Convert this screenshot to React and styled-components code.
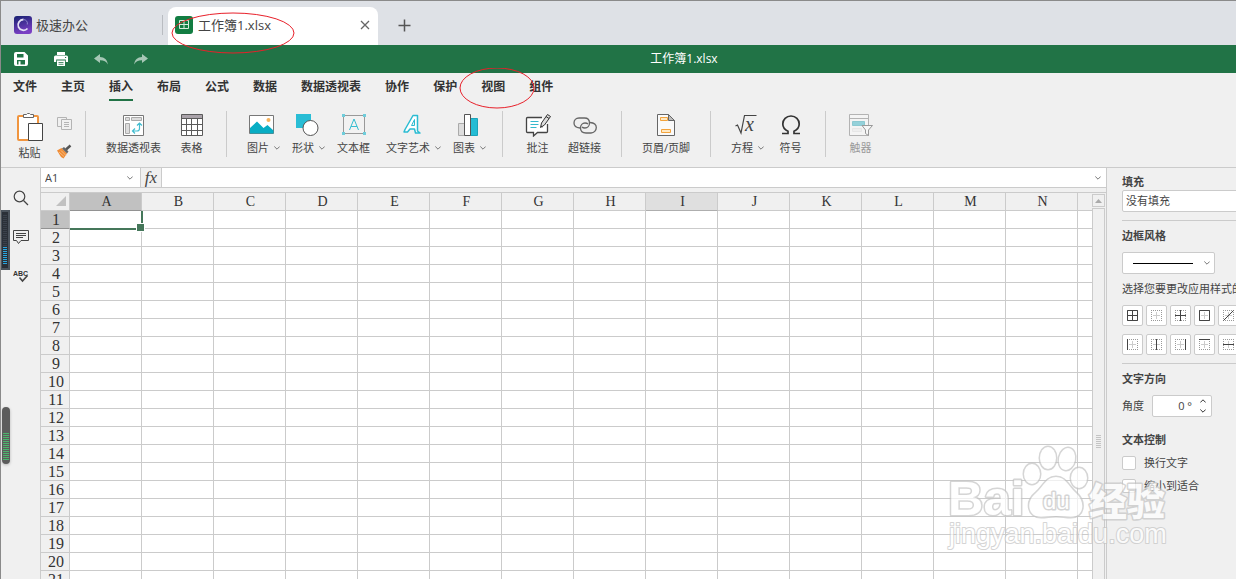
import React, { useState } from 'react';
import styled, { createGlobalStyle } from 'styled-components';

const GlobalStyle = createGlobalStyle`
  * {
    box-sizing: border-box;
  }

  body {
    margin: 0;
    overflow: hidden;
    color: #444;
    font-family: 'Open Sans', 'Noto Sans CJK SC', sans-serif;
    font-size: 11px;
    line-height: 16px;
  }

  button, input, select {
    margin: 0;
    padding: 0;
    border: none;
    border-radius: 0;
    background: none;
    color: inherit;
    font: inherit;
    outline: none;
  }

  button {
    cursor: pointer;
  }

  svg {
    display: block;
    flex: none;
  }
`;

const Window = styled.div`
  position: relative;
  display: flex;
  flex-direction: column;
  height: 100vh;
  overflow: hidden;
  background: #f0f0f0;
  border-top: 1px solid #8a8a8a;
  border-left: 1px solid #8a8a8a;
`;

/* ---------- document tabs ---------- */

const DocTabs = styled.nav`
  display: flex;
  flex: none;
  align-items: center;
  height: 44px;
  padding-left: 13px;
  background: #dee1e6;
  font-size: 13px;
`;

const HomeTab = styled.button`
  display: flex;
  align-items: center;
  gap: 4px;
  width: 149px;
  height: 20px;
  margin-top: 4px;
  border-right: 1px solid #b9bcc1;
`;

const DocTab = styled.div`
  display: flex;
  align-items: center;
  align-self: flex-end;
  width: 210px;
  height: 38px;
  margin-left: 5px;
  padding: 0 8px 2px 7px;
  background: #fff;
  border-radius: 8px 8px 0 0;
`;

const DocName = styled.button`
  display: flex;
  flex: 1;
  align-items: center;
  gap: 5px;
`;

const NewTab = styled.button`
  margin-left: 20px;
  padding-top: 5px;
`;

/* ---------- green title bar ---------- */

const TitleBar = styled.header`
  display: flex;
  flex: none;
  align-items: center;
  gap: 26px;
  height: 28px;
  padding: 0 42px 0 13px;
  background: #217346;
  color: #fff;
`;

const Title = styled.h1`
  flex: 1;
  margin: 0;
  font-size: 12px;
  font-weight: 400;
  text-align: center;
`;

/* ---------- ribbon ---------- */

const Menu = styled.nav`
  display: flex;
  flex: none;
  gap: 24px;
  height: 28px;
  padding-left: 12px;
`;

const MenuTab = styled.button`
  padding-top: 2px;
  border-bottom: 2px solid ${({ $active }) => ($active ? '#217346' : 'transparent')};
  color: #333;
  font-size: 12px;
  font-weight: 700;
`;

const Ribbon = styled.div`
  display: flex;
  flex: none;
  align-items: center;
  height: 67px;
  border-bottom: 1px solid #cbcbcb;
`;

const Group = styled.div`
  display: flex;
  align-items: center;
  height: 46px;
  padding: 0 12px;
  border-right: ${({ $last }) => ($last ? 'none' : '1px solid #cbcbcb')};
`;

const PasteGroup = styled(Group)`
  gap: 14px;
  padding: 6px 13px 0 15px;
`;

const PasteButton = styled.button`
  display: flex;
  flex-direction: column;
  align-items: center;
  gap: 2px;
`;

const SmallTools = styled.div`
  display: flex;
  flex-direction: column;
  gap: 13px;
`;

const ToolButton = styled.button`
  display: flex;
  flex-direction: column;
  align-items: center;
  gap: 3px;
  min-width: 45px;
  opacity: ${({ disabled }) => (disabled ? 0.5 : 1)};
`;

const ToolLabel = styled.span`
  display: flex;
  align-items: center;
  gap: 5px;
  padding: ${({ $menu }) => ($menu ? '0 4px 0 8px' : '0 8px')};
  white-space: nowrap;
`;

/* ---------- body ---------- */

const Body = styled.div`
  display: flex;
  flex: 1;
  min-height: 0;
`;

const SideBar = styled.aside`
  display: flex;
  flex: none;
  flex-direction: column;
  width: 40px;
  padding-top: 10px;
  border-right: 1px solid #cbcbcb;
`;

const SideButton = styled.button`
  display: flex;
  align-items: center;
  justify-content: center;
  height: 39px;
`;

const Main = styled.main`
  display: flex;
  flex: 1;
  flex-direction: column;
  min-width: 0;
`;

const FormulaBar = styled.div`
  display: flex;
  flex: none;
  height: 20px;
  background: #fff;
  border-bottom: 1px solid #cbcbcb;
`;

const NameBox = styled.div`
  display: flex;
  align-items: center;
  width: 100px;
  padding: 0 7px 0 4px;
  border-right: 1px solid #cbcbcb;

  input {
    flex: 1;
    min-width: 0;
  }
`;

const FxButton = styled.button`
  width: 21px;
  background: #f0f0f0;
  border-right: 1px solid #cbcbcb;
  font-family: 'Liberation Serif', serif;
  font-size: 17px;
  font-style: italic;
`;

const FormulaInput = styled.input`
  flex: 1;
  min-width: 0;
  padding: 0 4px;
`;

const ExpandButton = styled.button`
  padding-right: 5px;
`;

const SheetArea = styled.div`
  display: flex;
  flex: 1;
  min-height: 0;
  margin-top: 4px;
  border-top: 1px solid #cbcbcb;
`;

const Sheet = styled.div`
  flex: 1;
  min-width: 0;
  overflow: hidden;
  background: #fff;
`;

const Grid = styled.table`
  width: max-content;
  border-spacing: 0;
  table-layout: fixed;
  font-family: 'Liberation Serif', serif;
  font-size: 16px;
`;

const Corner = styled.td`
  width: 29px;
  height: 18px;
  padding: 0 3px 2px 0;
  background: #f0f0f0;
  border-right: 1px solid #cbcbcb;
  border-bottom: 1px solid #cbcbcb;

  svg {
    margin-left: auto;
  }
`;

const headFill = { selected: '#c1c1c1', hover: '#dfdfdf', plain: '#f0f0f0' };
const headLine = { selected: '#929292', hover: '#aeaeae', plain: '#cbcbcb' };

const HeadCell = styled.th`
  height: 18px;
  padding: 0 0 0 2px;
  background: ${({ $state }) => headFill[$state]};
  border-right: 1px solid #cbcbcb;
  border-bottom: 1px solid ${({ $state }) => headLine[$state]};
  font-weight: 400;
  line-height: 16px;
  color: #333;
`;

const ColHead = styled(HeadCell)`
  width: 72px;
  font-size: 14px;
`;

const Cell = styled.td`
  position: relative;
  height: 18px;
  padding: 0;
  border-right: 1px solid #cbcbcb;
  border-bottom: 1px solid #cbcbcb;
`;

/* the frame sits on top of the grid lines of the selected cell */
const Selection = styled.div`
  position: absolute;
  z-index: 1;
  top: 0;
  right: -2px;
  bottom: -2px;
  left: 0;
  border-right: 2px solid #45775a;
  border-bottom: 2px solid #45775a;

  &::after {
    content: '';
    position: absolute;
    right: -4px;
    bottom: -4px;
    width: 7px;
    height: 7px;
    background: #45775a;
    border: 1px solid #fff;
  }
`;

const ScrollBar = styled.div`
  display: flex;
  flex: none;
  flex-direction: column;
  gap: 1px;
  width: 14px;
  padding: 1px 1px 0 0;
`;

const ScrollUp = styled.button`
  display: flex;
  flex: none;
  align-items: center;
  justify-content: center;
  height: 13px;
  border: 1px solid #cbcbcb;
`;

const ScrollThumb = styled.div`
  display: flex;
  flex: none;
  align-items: center;
  justify-content: center;
  height: 466px;
  border: 1px solid #cbcbcb;

  &::after {
    content: '';
    width: 5px;
    height: 13px;
    background: repeating-linear-gradient(#c4c4c4 0 1px, transparent 1px 2px);
  }
`;

/* ---------- settings panel ---------- */

const Panel = styled.aside`
  flex: none;
  width: 130px;
  padding: 6px 0 0 15px;
  overflow: hidden;
  border-left: 1px solid #cbcbcb;
`;

const PanelTitle = styled.h2`
  margin: 0;
  font-size: 11px;
  font-weight: 700;
  line-height: 16px;
`;

const Rule = styled.hr`
  width: 200px;
  height: 1px;
  margin: 8px 0 7px;
  border: none;
  background: #cbcbcb;
`;

const SelectBox = styled.div`
  display: grid;
  align-items: center;
  width: ${({ $wide }) => ($wide ? '194px' : '93px')};
  height: 22px;
  background: #fff;
  border: 1px solid #cbcbcb;
  border-radius: 2px;

  > * {
    grid-area: 1 / 1;
  }

  > svg {
    justify-self: end;
    margin-right: 4px;
    pointer-events: none;
  }

  > svg:nth-child(2):not(:last-child) {
    justify-self: start;
    margin-left: 10px;
  }
`;

const Select = styled.select`
  width: 100%;
  height: 20px;
  padding: 0 3px;
  appearance: none;
`;

const BorderSelect = styled(SelectBox)`
  margin: 8px 0 7px;
`;

const Hint = styled.p`
  margin: 0;
  white-space: nowrap;
`;

const BorderGrid = styled.div`
  display: grid;
  grid-template-columns: repeat(8, 21px);
  gap: 8px 3px;
  margin-top: 8px;
`;

const BorderButton = styled.button`
  display: flex;
  align-items: center;
  justify-content: center;
  height: 21px;
  background: #fff;
  border: 1px solid #cbcbcb;
  border-radius: 2px;
`;

const AngleRow = styled.div`
  display: flex;
  align-items: center;
  gap: 8px;
  margin: 8px 0 15px;
`;

const Spinner = styled.div`
  display: flex;
  align-items: center;
  width: 60px;
  height: 22px;
  padding-right: 5px;
  background: #fff;
  border: 1px solid #cbcbcb;
  border-radius: 2px;

  input {
    width: 39px;
    margin-right: 8px;
    min-width: 0;
    text-align: right;
  }
`;

const Steps = styled.div`
  display: flex;
  flex-direction: column;
  gap: 6px;
`;

const CheckRow = styled.label`
  display: flex;
  align-items: center;
  gap: 8px;
  height: 16px;
  margin-top: 7px;
  white-space: nowrap;
`;

const CheckBox = styled.input`
  flex: none;
  width: 14px;
  height: 14px;
  appearance: none;
  background: #fff;
  border: 1px solid #cbcbcb;
  border-radius: 2px;
`;

/* ---------- things floating over the window ---------- */

const Mark = styled.svg`
  position: absolute;
  top: ${({ $top }) => $top}px;
  left: ${({ $left }) => $left}px;
  pointer-events: none;
`;

const Meter = styled.div`
  position: absolute;
  top: 209px;
  left: 0;
  width: 9px;
  height: 60px;
  padding: 3px 1px;
  background: #2b3038;
  border: 2px solid #4b535c;
  border-left-width: 1px;

  &::after {
    content: '';
    display: block;
    height: 100%;
    background:
      repeating-linear-gradient(transparent 0 1px, #2b3038 1px 2px),
      linear-gradient(#3b424c 62%, #2aa7e0 62%);
  }
`;

const Pill = styled.div`
  position: absolute;
  top: 406px;
  left: 1px;
  width: 8px;
  height: 57px;
  padding: 26px 1px 3px;
  background: #5c5c5c;
  border-radius: 4px;
  box-shadow: 0 1px 3px rgba(0, 0, 0, 0.25);

  &::after {
    content: '';
    display: block;
    height: 100%;
    background: repeating-linear-gradient(#4cb56d 0 1px, #5c5c5c 1px 2px);
  }
`;

const Watermark = styled.svg`
  position: absolute;
  right: 60px;
  bottom: 20px;
  pointer-events: none;
`;

/* ---------- icons ---------- */

const Svg = ({ w = 24, h = 24, children }) => (
  <svg width={w} height={h} viewBox={`0 0 ${w} ${h}`} fill="none" aria-hidden="true">
    {children}
  </svg>
);

const Chevron = ({ up, dark }) => (
  <Svg w={6} h={4}>
    <path d={up ? 'M.3 3.500 3 .8 5.700 3.500' : 'M.3.5 3 3.200 5.700.5'} stroke={dark ? '#333' : '#777'} />
  </Svg>
);

const LogoIcon = () => (
  <Svg w={18} h={18}>
    <defs>
      <linearGradient id="logo" x1="0" y1="0" x2="0.3" y2="1">
        <stop offset="0" stopColor="#14206f" />
        <stop offset="1" stopColor="#7a3fc4" />
      </linearGradient>
    </defs>
    <rect width="18" height="18" rx="3" fill="url(#logo)" />
    <path d="M9.500 3.500a5.400 5.400 0 1 0 4 9" stroke="#e4e0f5" strokeWidth="1.800" />
    <path d="M9.500 3.500c2.800.2 4.500 2.500 3.800 5" stroke="#8f86cc" />
  </Svg>
);

const SheetIcon = () => (
  <Svg w={18} h={18}>
    <rect width="18" height="18" rx="3" fill="#127d42" />
    <path d="M4.500 4.500h9v8h-9zM9 4.500v8M4.500 8.500h9" stroke="#d9ecdf" />
  </Svg>
);

const CloseIcon = () => (
  <Svg w={10} h={10}>
    <path d="m1 1 8 8M9 1 1 9" stroke="#666" strokeWidth="1.300" />
  </Svg>
);

const PlusIcon = () => (
  <Svg w={13} h={13}>
    <path d="M6.500.5v12M.5 6.500h12" stroke="#555" strokeWidth="1.500" />
  </Svg>
);

const SaveIcon = () => (
  <Svg w={14} h={14}>
    <path fillRule="evenodd" d="M2 0h8.500L14 3.500V12a2 2 0 0 1-2 2H2a2 2 0 0 1-2-2V2a2 2 0 0 1 2-2zM3 2v3.500h6.500V2zM3 8v4.500h8V8zM4.500 9.200h2v3.300h-2z" fill="#fff" />
  </Svg>
);

const PrintIcon = () => (
  <Svg w={14} h={14}>
    <path d="M3 0h8v3H3zM1.500 3.500h11A1.500 1.500 0 0 1 14 5v5h-2.200V7.500H2.200V10H0V5a1.500 1.500 0 0 1 1.500-1.500z" fill="#fff" />
    <path d="M3 8.500h8V14H3z" fill="#fff" />
    <path d="M4.500 10.500h5M4.500 12.300h5" stroke="#217346" strokeWidth=".8" />
    <path d="M11 5.500h1.200" stroke="#217346" />
  </Svg>
);

const UndoIcon = () => (
  <Svg w={14} h={14}>
    <path d="M0 6.500 6 2v3c4.500.2 7.300 2.800 7.800 7.500C12.300 9.700 10 8.300 6 8.300V11z" fill="#a6c7b5" />
  </Svg>
);

const RedoIcon = () => (
  <Svg w={14} h={14}>
    <path d="M14 6.500 8 2v3C3.500 5.200.7 7.800.2 12.500 1.700 9.700 4 8.300 8 8.300V11z" fill="#a6c7b5" />
  </Svg>
);

const PasteIcon = () => (
  <Svg w={27} h={30}>
    <rect x="2" y="3" width="20" height="24" rx="1" fill="#fff" stroke="#f0953f" strokeWidth="2" />
    <path d="M7.500 4.500v-3h3l1-1h2l1 1h3v3z" fill="#fff" stroke="#666" />
    <path d="M12.500 10.500h14v17h-14z" fill="#fff" stroke="#444" />
  </Svg>
);

const CopyIcon = () => (
  <Svg w={15} h={15}>
    <path d="M.5 1.500h9v9h-9z" fill="#f0f0f0" stroke="#b4b4b4" />
    <path d="M4.500 3.500h10v10h-10zM7 6.500h5M7 8.500h5M7 10.500h5" fill="#f0f0f0" stroke="#b4b4b4" />
  </Svg>
);

const BrushIcon = () => (
  <Svg w={15} h={15}>
    <path d="M0 6.500 4.500 4 10 9.500 6.500 14.500 4 13z" fill="#f08c35" />
    <path d="m2 8 5 4.500M4 6.500l5 5" stroke="#f7c896" strokeWidth=".8" />
    <path d="m5 4.500 2-1.500 4.500 4.500-1.500 2z" fill="#666" />
    <path d="m9 5.500 4.500-4" stroke="#555" strokeWidth="2.500" />
  </Svg>
);

const PivotIcon = () => (
  <Svg>
    <path d="M1.500 2.500h20v20h-20z" fill="#fff" stroke="#777" />
    <path d="M3.500 4.500h4v3h-4zM9.500 4.500h10v3h-10zM3.500 10.500h4v10h-4z" fill="#ddd" stroke="#aaa" />
    <path d="M17.500 10.500v5c0 1.500-1 2.500-2.500 2.500h-4.500M15 12.500l2.500-2.500 2.500 2.500M13 15.500 10.500 18l2.500 2.500" stroke="#43bdd0" strokeWidth="1.200" />
  </Svg>
);

const TableIcon = () => (
  <Svg>
    <path d="M1.500 1.500h21v21h-21z" fill="#fff" />
    <path d="M1.500 1.500h21v3.500h-21z" fill="#aaa3aa" />
    <path d="M1.500 1.500h21v21h-21zM1.500 5.500h21M1.500 11.500h21M1.500 17.500h21M6.500 5v17.500M11.500 5v17.500M17.500 5v17.500" stroke="#5a5a5a" />
  </Svg>
);

const ImageIcon = () => (
  <Svg w={26}>
    <path d="M.5 2.500h24v18H.5z" fill="#fff" stroke="#777" />
    <path d="M1 19.500V15l7-6.500 6.500 6.500 4-3 6 5.500v3H1z" fill="#08adc4" />
    <circle cx="19.500" cy="7" r="2" fill="#f7b35c" />
  </Svg>
);

const ShapeIcon = () => (
  <Svg>
    <path d="M1 1h15v14H1z" fill="#29bdd5" />
    <circle cx="15.500" cy="15" r="7.500" fill="#fff" stroke="#555" />
  </Svg>
);

const TextBoxIcon = () => (
  <Svg>
    <path d="M1.500 2.500h21v18h-21z" fill="#f2f2f2" stroke="#999" />
    <path d="M0 1h3v3H0zM21 1h3v3h-3zM0 19h3v3H0zM21 19h3v3h-3z" fill="#6fcddb" />
    <path d="M7.500 17 12 6l4.500 11M9 13.500h6" stroke="#35bdd0" />
  </Svg>
);

const WordArtIcon = () => (
  <Svg>
    <path d="M5 16.500 13 2.500h4.500L17.500 18l2.500 2h-4.500l-1-4H10l-2.500 3H4z" fill="#fff" stroke="#2bbcd2" strokeWidth="1.500" strokeLinejoin="round" />
    <path d="m14.500 6.500-3 6h3z" fill="#f0f0f0" stroke="#2bbcd2" />
  </Svg>
);

const ChartIcon = () => (
  <Svg>
    <path d="M2.500 10.500h7v12h-7z" fill="#ddd" stroke="#aaa" />
    <path d="M14.500 5.500h7v17h-7z" fill="#24bcd4" stroke="#1aa3b9" />
    <path d="M8.500 1.500h6v21h-6z" fill="#fff" stroke="#555" />
  </Svg>
);

const CommentIcon = () => (
  <Svg w={26}>
    <path d="M17 4.500H2.500c-.7 0-1 .3-1 1v13c0 .7.300 1 1 1h6V23l4-3.500h9c.7 0 1-.3 1-1V11" fill="#fff" stroke="#444" strokeWidth="1.300" />
    <path d="M5.500 8.500h8M5.500 11.500h8M5.500 14.500h6" stroke="#35b8cc" />
    <path d="m15.500 14.500 1-4.500 6-8.500 3 2-6 8.500z" fill="#ddd" stroke="#333" strokeLinejoin="round" />
    <path d="m21 3.500 3 2M16 13l1.500 1" stroke="#333" />
  </Svg>
);

const LinkIcon = () => (
  <Svg>
    <path d="M7 15c-3.500-.3-6-2.300-6-5s2-5 5-5h5.500c3 0 5 2 5 5s-2 5-4.500 5c-1.500 0-2.500-.5-3-1" stroke="#666" strokeWidth="1.300" />
    <path d="M17 9.500c3.700.3 6.300 2 6.300 5s-2.300 5.500-5.300 5.500h-5c-3.500 0-5.500-2-5.500-5s2-5 4.500-5c1.500 0 2.500.5 3 1" stroke="#666" strokeWidth="1.300" />
  </Svg>
);

const HeaderFooterIcon = () => (
  <Svg>
    <path d="M3.500 1.500h11l6 6v15h-17z" fill="#fafafa" stroke="#666" />
    <path d="M14.500 1.500v6h6z" fill="#bbb" stroke="#666" />
    <path d="M6.500 4.500h7v3h-7zM7.500 16.500h9v3h-9z" fill="#ffe8c2" stroke="#f2a33c" />
  </Svg>
);

const EquationIcon = () => (
  <Svg>
    <path d="m1.500 13 2-1 3.500 8 3.500-17.500h12" stroke="#444" strokeWidth="1.200" />
    <text x="11" y="18" fontFamily="Liberation Serif, serif" fontSize="20" fontStyle="italic" fill="#444">x</text>
  </Svg>
);

const OmegaIcon = () => (
  <Svg>
    <path d="M3 20.500h6v-2.300C6 16.800 3.800 14.300 3.800 11c0-4.500 3.400-8 8.200-8s8.200 3.500 8.200 8c0 3.300-2.200 5.800-5.200 7.200v2.300h6" stroke="#333" strokeWidth="1.700" />
  </Svg>
);

const SlicerIcon = () => (
  <Svg w={26}>
    <path d="M1.500 1.500h19v21h-19zM1.500 5.500h19" fill="#f8f8f8" stroke="#777" />
    <path d="M4.500 8.500h12v4h-12z" fill="#3bb4c5" stroke="#2aa3b4" />
    <path d="M4.500 15.500h9v3h-9z" fill="#eee" stroke="#ddd" />
    <path d="M14 12.500h10.500l-4 4.500v5.500l-3-2V17z" fill="#fff" stroke="#444" />
  </Svg>
);

const SearchIcon = () => (
  <Svg w={16} h={16}>
    <circle cx="6.500" cy="6.500" r="5.300" stroke="#444" strokeWidth="1.200" />
    <path d="m10.500 10.500 4.500 4.500" stroke="#444" strokeWidth="1.300" />
  </Svg>
);

const NoteIcon = () => (
  <Svg w={16} h={16}>
    <path d="M.5 1.500h15v10H8l-2.500 3-2-3h-3zM3 4.500h10M3 6.500h10M3 8.500h7" stroke="#444" />
  </Svg>
);

const SpellIcon = () => (
  <Svg w={16} h={16}>
    <text x="0" y="8" fontFamily="Liberation Sans, sans-serif" fontSize="7" fontWeight="700" fill="#333">ABC</text>
    <path d="m6.500 9.500 3 3.500 5-5.500" stroke="#444" strokeWidth="1.600" />
  </Svg>
);

/* the stroke drawn dark over the dotted frame */
const borderKinds = [
  ['全部', 'M1.500 1.500h10v10h-10zM6.500 1.500v10M1.500 6.500h10'],
  ['无', ''],
  ['内部', 'M6.500 1v11M1 6.500h11'],
  ['外部', 'M1.500 1.500h10v10h-10z'],
  ['斜线', 'M1.500 11.500l10-10'],
  ['反斜线', 'M1.500 1.500l10 10'],
  ['左上', 'M1.500 1v11'],
  ['左下', 'M1 11.500h11'],
  ['左', 'M1.500 1v11'],
  ['垂直', 'M6.500 1v11'],
  ['右', 'M11.500 1v11'],
  ['上', 'M1 1.500h11'],
  ['水平', 'M1 6.500h11'],
  ['下', 'M1 11.500h11'],
];

const BorderIcon = ({ d }) => (
  <Svg w={13} h={13}>
    <path d="M1 1.500h11M1 11.500h11M1.500 1v11M11.500 1v11" stroke="#999" strokeDasharray="1 1" />
    <path d="M6.500 3v7M3 6.500h7" stroke="#ccc" />
    <path d={d} stroke="#444" />
  </Svg>
);

/* ---------- data ---------- */

const menu = ['文件', '主页', '插入', '布局', '公式', '数据', '数据透视表', '协作', '保护', '视图', '组件'];

const toolGroups = [
  [
    { label: '数据透视表', Icon: PivotIcon },
    { label: '表格', Icon: TableIcon },
  ],
  [
    { label: '图片', Icon: ImageIcon, menu: true },
    { label: '形状', Icon: ShapeIcon, menu: true },
    { label: '文本框', Icon: TextBoxIcon },
    { label: '文字艺术', Icon: WordArtIcon, menu: true },
    { label: '图表', Icon: ChartIcon, menu: true },
  ],
  [
    { label: '批注', Icon: CommentIcon },
    { label: '超链接', Icon: LinkIcon },
  ],
  [{ label: '页眉/页脚', Icon: HeaderFooterIcon }],
  [
    { label: '方程', Icon: EquationIcon, menu: true },
    { label: '符号', Icon: OmegaIcon },
  ],
  [{ label: '触器', Icon: SlicerIcon, disabled: true }],
];

const columns = 'ABCDEFGHIJKLMNO'.split('');
const rows = Array.from({ length: 24 }, (_, i) => i + 1);

const columnState = (name) => {
  if (name === 'A') return 'selected';
  return name === 'I' ? 'hover' : 'plain';
};

const App = () => {
  const [tab, setTab] = useState('插入');
  const [wrap, setWrap] = useState(false);
  const [shrink, setShrink] = useState(false);

  return (
    <Window>
      <GlobalStyle />

      <DocTabs>
        <HomeTab><LogoIcon />极速办公</HomeTab>
        <DocTab>
          <DocName><SheetIcon />工作簿1.xlsx</DocName>
          <button aria-label="关闭"><CloseIcon /></button>
        </DocTab>
        <NewTab aria-label="新建"><PlusIcon /></NewTab>
      </DocTabs>

      <TitleBar>
        <button aria-label="保存"><SaveIcon /></button>
        <button aria-label="打印"><PrintIcon /></button>
        <button aria-label="撤销"><UndoIcon /></button>
        <button aria-label="重做"><RedoIcon /></button>
        <Title>工作簿1.xlsx</Title>
      </TitleBar>

      <Menu>
        {menu.map((name) => (
          <MenuTab key={name} $active={name === tab} onClick={() => setTab(name)}>{name}</MenuTab>
        ))}
      </Menu>

      <Ribbon>
        <PasteGroup>
          <PasteButton><PasteIcon />粘贴</PasteButton>
          <SmallTools>
            <button aria-label="复制"><CopyIcon /></button>
            <button aria-label="格式刷"><BrushIcon /></button>
          </SmallTools>
        </PasteGroup>
        {toolGroups.map((group, i) => (
          <Group key={group[0].label} $last={i === toolGroups.length - 1}>
            {group.map((tool) => (
              <ToolButton key={tool.label} disabled={tool.disabled}>
                <tool.Icon />
                <ToolLabel $menu={tool.menu}>
                  {tool.label}
                  {tool.menu && <Chevron />}
                </ToolLabel>
              </ToolButton>
            ))}
          </Group>
        ))}
      </Ribbon>

      <Body>
        <SideBar>
          <SideButton aria-label="搜索"><SearchIcon /></SideButton>
          <SideButton aria-label="批注"><NoteIcon /></SideButton>
          <SideButton aria-label="拼写检查"><SpellIcon /></SideButton>
        </SideBar>

        <Main>
          <FormulaBar>
            <NameBox>
              <input aria-label="名称框" defaultValue="A1" />
              <button aria-label="名称列表"><Chevron /></button>
            </NameBox>
            <FxButton>fx</FxButton>
            <FormulaInput aria-label="编辑栏" />
            <ExpandButton aria-label="展开编辑栏"><Chevron /></ExpandButton>
          </FormulaBar>

          <SheetArea>
            <Sheet>
              <Grid>
                <thead>
                  <tr>
                    <Corner>
                      <Svg w={10} h={10}><path d="M10 0v10H0z" fill="#c1c1c1" /></Svg>
                    </Corner>
                    {columns.map((name) => (
                      <ColHead key={name} scope="col" $state={columnState(name)}>{name}</ColHead>
                    ))}
                  </tr>
                </thead>
                <tbody>
                  {rows.map((row) => (
                    <tr key={row}>
                      <HeadCell scope="row" $state={row === 1 ? 'selected' : 'plain'}>{row}</HeadCell>
                      {columns.map((name) => (
                        <Cell key={name}>{row === 1 && name === 'A' && <Selection />}</Cell>
                      ))}
                    </tr>
                  ))}
                </tbody>
              </Grid>
            </Sheet>
            <ScrollBar>
              <ScrollUp aria-label="向上滚动">
                <Svg w={7} h={4}><path d="M0 4 3.500 0 7 4z" fill="#aaa" /></Svg>
              </ScrollUp>
              <ScrollThumb />
            </ScrollBar>
          </SheetArea>
        </Main>

        <Panel>
          <PanelTitle>填充</PanelTitle>
          <SelectBox $wide>
            <Select aria-label="填充">
              <option>没有填充</option>
            </Select>
            <Chevron />
          </SelectBox>
          <Rule />
          <PanelTitle>边框风格</PanelTitle>
          <BorderSelect>
            <Select aria-label="边框风格">
              <option aria-label="实线" />
            </Select>
            <Svg w={60} h={1}><path d="M0 .5h60" stroke="#000" /></Svg>
            <Chevron />
          </BorderSelect>
          <Hint>选择您要更改应用样式的边框</Hint>
          <BorderGrid>
            {borderKinds.slice(0, 8).map(([name, d]) => (
              <BorderButton key={name} aria-label={name}><BorderIcon d={d} /></BorderButton>
            ))}
            {borderKinds.slice(8).map(([name, d]) => (
              <BorderButton key={name} aria-label={name}><BorderIcon d={d} /></BorderButton>
            ))}
          </BorderGrid>
          <Rule />
          <PanelTitle>文字方向</PanelTitle>
          <AngleRow>
            <label htmlFor="angle">角度</label>
            <Spinner>
              <input id="angle" defaultValue="0 °" />
              <Steps>
                <button aria-label="增加"><Chevron up dark /></button>
                <button aria-label="减少"><Chevron dark /></button>
              </Steps>
            </Spinner>
          </AngleRow>
          <PanelTitle>文本控制</PanelTitle>
          <CheckRow>
            <CheckBox type="checkbox" checked={wrap} onChange={() => setWrap(!wrap)} />
            换行文字
          </CheckRow>
          <CheckRow>
            <CheckBox type="checkbox" checked={shrink} onChange={() => setShrink(!shrink)} />
            缩小到适合
          </CheckRow>
        </Panel>
      </Body>

      <Meter />
      <Pill />

      <Mark $left={170} $top={11} width="126" height="42" fill="none">
        <ellipse cx="62" cy="21" rx="61" ry="20" stroke="#e8202a" />
      </Mark>
      <Mark $left={458} $top={67} width="78" height="42" fill="none">
        <ellipse cx="38" cy="20" rx="37" ry="20" stroke="#e8202a" />
      </Mark>

      <Watermark width="230" height="114" viewBox="0 0 230 114" opacity=".7">
        <g fill="#fff" stroke="#c4c4c4" strokeWidth="3" paintOrder="stroke" strokeLinejoin="round" fontFamily="Liberation Sans, sans-serif">
          <text x="2" y="70" fontSize="49" fontWeight="700">Bai</text>
          <ellipse cx="86" cy="29" rx="8" ry="10" />
          <ellipse cx="102" cy="13" rx="8" ry="11" />
          <ellipse cx="121" cy="14" rx="8" ry="11" transform="rotate(12 121 14)" />
          <ellipse cx="133" cy="33" rx="8" ry="10" />
          <path d="M110 32c10 0 12 9 20 16 10 9 8 24-5 24-6 0-9-1-15-1s-9 1-15 1c-13 0-16-15-5-24 8-7 10-16 20-16z" />
          <text x="97" y="64" fontSize="24">du</text>
          <text x="143" y="70" fontSize="38" fontWeight="900" fontFamily="Noto Sans CJK SC, sans-serif">经验</text>
          <text x="3" y="98" fontSize="27" strokeWidth="2">jingyan.baidu.com</text>
        </g>
      </Watermark>
    </Window>
  );
};

export default App;
